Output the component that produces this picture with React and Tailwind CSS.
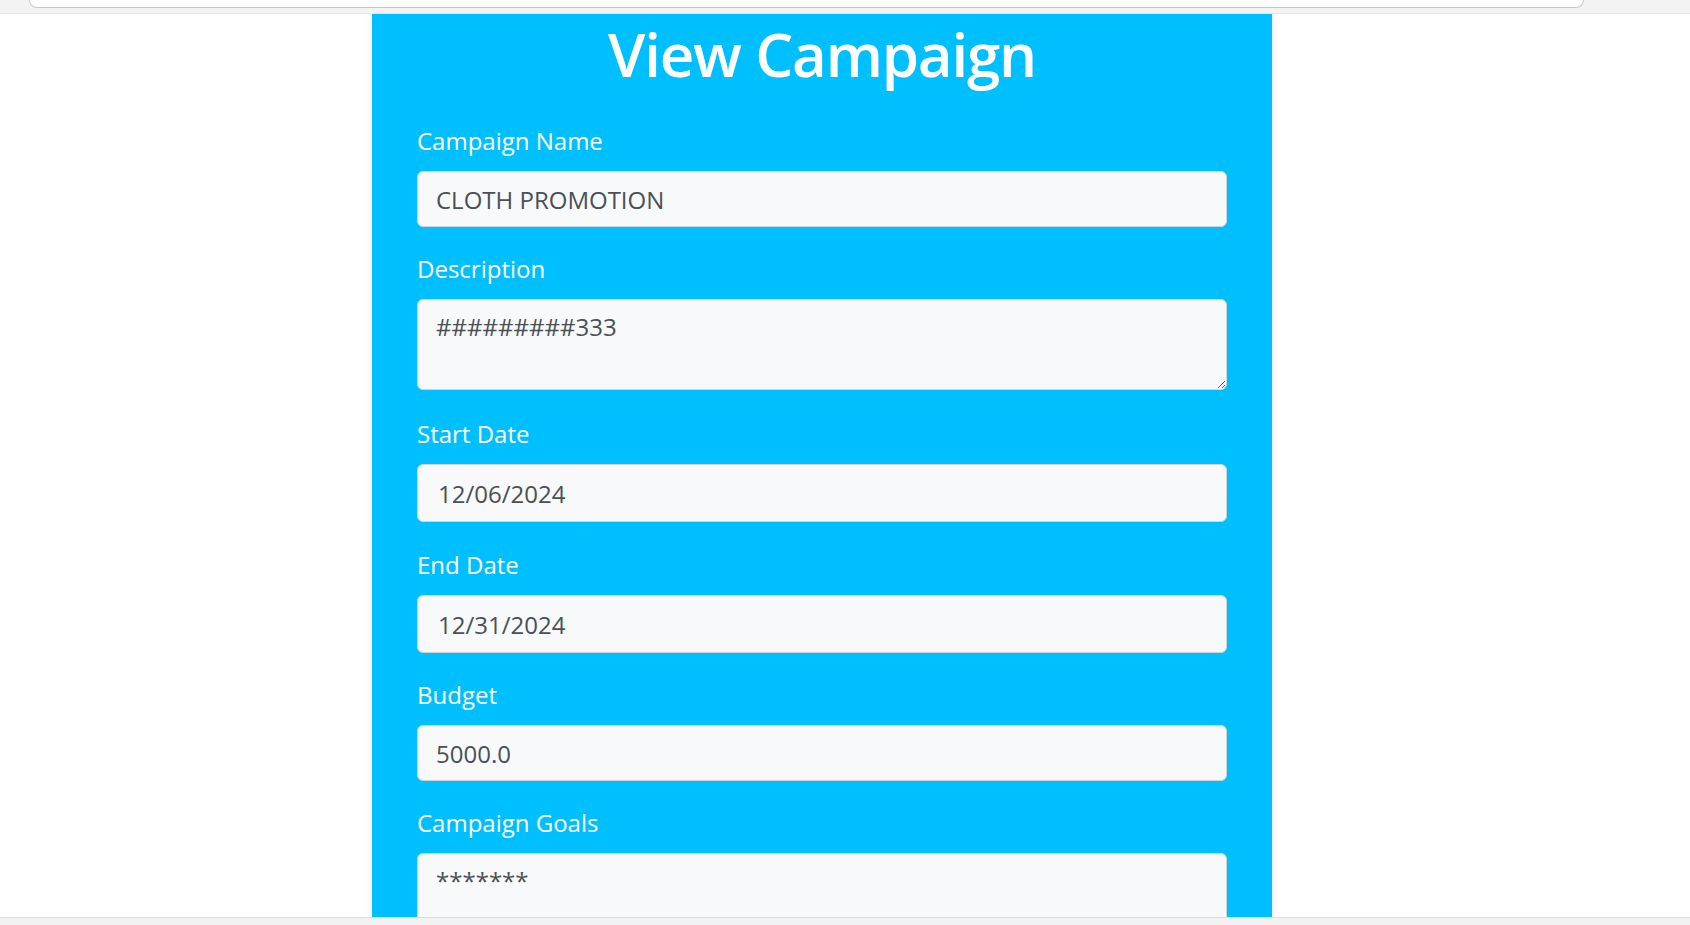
const campaign = [
  { label: "Campaign Name", value: "CLOTH PROMOTION", h: "h-[56px]", gap: "mb-[24px]" },
  { label: "Description", value: "#########333", area: true, h: "h-[91px]", gap: "mb-[26px]" },
  { label: "Start Date", value: "12/06/2024", h: "h-[58px]", gap: "mb-[25px]", date: true },
  { label: "End Date", value: "12/31/2024", h: "h-[58px]", gap: "mb-[24px]", date: true },
  { label: "Budget", value: "5000.0", h: "h-[56px]", gap: "mb-[24px]" },
  { label: "Campaign Goals", value: "*******", area: true, h: "h-[120px]", gap: "mb-[24px]" },
];

const Field = ({ field }) => {
  const base =
    "block w-full rounded-[6px] border border-[#ced4da] bg-[#f8f9fa] text-[24px] text-[#495057] outline-none";
  return (
    <div className={field.gap}>
      <label className="block mb-[12px] leading-[36px] text-[24px] text-white">
        {field.label}
      </label>
      {field.area ? (
        <textarea
          readOnly
          value={field.value}
          className={`${base} ${field.h} px-[18px] py-[9px] leading-[36px]`}
        />
      ) : (
        <input
          readOnly
          value={field.value}
          className={`${base} ${field.h} ${field.date ? "px-[20px]" : "px-[18px]"}`}
        />
      )}
    </div>
  );
};

export default function App() {
  return (
    <div
      className="flex flex-col h-[925px] overflow-hidden bg-white"
      style={{ fontFamily: '"Open Sans", "Noto Sans", sans-serif' }}
    >
      {/* browser chrome strip */}
      <div className="h-[14px] shrink-0 bg-[#f3f3f3] border-b border-[#e6e6e6] px-[29px] pr-[106px]">
        <div className="h-[8px] bg-white border border-t-0 border-[#c9c9c9] rounded-b-[10px]" />
      </div>

      <div className="flex-1 overflow-hidden pr-[46px]">
        <div className="mx-auto w-[900px] min-h-full bg-[#00bfff] px-[45px] shadow-[0_0_10px_rgba(0,0,0,0.08)]">
          <h1 className="pt-[3px] text-center text-[60px] font-semibold leading-[74px] tracking-[-0.02em] text-white mb-[32px]">
            View Campaign
          </h1>
          <form>
            {campaign.map((field) => (
              <Field key={field.label} field={field} />
            ))}
          </form>
        </div>
      </div>

      {/* bottom bar */}
      <div className="h-[8px] shrink-0 bg-[#f2f2f2] border-t border-[#dcdcdc]" />
    </div>
  );
}
